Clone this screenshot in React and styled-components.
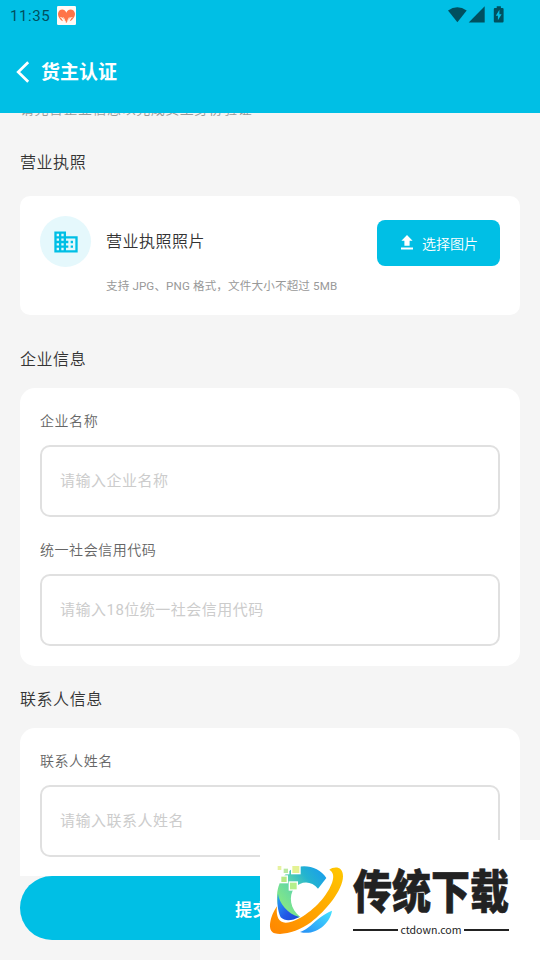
import React from "react";
import styled, { createGlobalStyle } from "styled-components";

const CYAN = "#00bfe5";

const GlobalStyle = createGlobalStyle`
  * { box-sizing: border-box; }
  body {
    margin: 0;
    background: #f5f5f5;
    font-family: Roboto, "Noto Sans CJK SC", sans-serif;
    font-weight: 350;
  }
`;

const Screen = styled.div`
  position: relative;
  width: 540px;
  height: 960px;
  overflow: hidden;
  display: flex;
  flex-direction: column;
  background: #f5f5f5;
`;

const StatusBar = styled.div`
  flex: none;
  height: 31px;
  padding: 0 35px 0 10px;
  display: flex;
  align-items: center;
  justify-content: space-between;
  background: ${CYAN};
  color: #00505f;
`;

const StatusGroup = styled.div`
  display: flex;
  align-items: center;
`;

const Clock = styled.span`
  width: 47px;
  font-size: 15px;
  line-height: 18px;
  font-weight: 400;
  letter-spacing: 0.6px;
  white-space: nowrap;
`;

const Header = styled.header`
  flex: none;
  height: 82px;
  padding-left: 16px;
  display: flex;
  align-items: center;
  gap: 11px;
  background: ${CYAN};
`;

const HeaderTitle = styled.h1`
  margin: 0;
  padding-top: 2px;
  color: #fff;
  font-size: 19px;
  line-height: 28px;
  font-weight: 700;
`;

const Content = styled.main`
  flex: 1;
  min-height: 0;
  overflow: hidden;
  padding: 0 20px;
  display: flex;
  flex-direction: column;
`;

const Intro = styled.p`
  flex: none;
  margin: -14px 0 0;
  height: 20px;
  color: #999;
  font-size: 14px;
  line-height: 20px;
  letter-spacing: 0.52px;
`;

const SectionTitle = styled.h2`
  flex: none;
  margin: ${(p) => p.$top}px 0 ${(p) => p.$bottom}px;
  height: 24px;
  color: #333;
  font-size: 16px;
  line-height: 24px;
  font-weight: 350;
  letter-spacing: 0.55px;
`;

const UploadCard = styled.section`
  flex: none;
  height: 119px;
  padding: 20px;
  display: flex;
  align-items: flex-start;
  background: #fff;
  border-radius: 10px;
`;

const IconCircle = styled.div`
  flex: none;
  width: 51px;
  height: 51px;
  display: grid;
  place-items: center;
  border-radius: 50%;
  background: #e5f8fc;
`;

const UploadText = styled.div`
  flex: 1;
  padding: 14px 0 0 15px;
  white-space: nowrap;
`;

const UploadTitle = styled.div`
  color: #333;
  font-size: 16px;
  line-height: 24px;
  letter-spacing: 0.5px;
`;

const UploadHint = styled.div`
  margin-top: 23px;
  color: #999;
  font-size: 11.6px;
  line-height: 18px;
  font-weight: 400;
  letter-spacing: 0.12px;
`;

const PickButton = styled.button`
  flex: none;
  width: 123px;
  height: 46px;
  margin-top: 4px;
  padding: 0 0 1px 2px;
  display: flex;
  align-items: center;
  justify-content: center;
  gap: 9px;
  border: 0;
  border-radius: 8px;
  background: ${CYAN};
  color: #fff;
  font: inherit;
  font-size: 14px;
`;

const FormCard = styled.section`
  flex: none;
  padding: 20px;
  display: flex;
  flex-direction: column;
  gap: 20px;
  background: #fff;
  border-radius: ${(p) => (p.$continues ? "15px 15px 0 0" : "15px")};
`;

const Field = styled.label`
  display: flex;
  flex-direction: column;
  gap: 11px;
`;

const FieldLabel = styled.span`
  height: 26px;
  color: #666;
  font-size: 14px;
  line-height: 26px;
  letter-spacing: 0.55px;
`;

const Input = styled.input`
  width: 100%;
  height: 72px;
  padding: 0 18px;
  border: 2px solid #e0e0e0;
  border-radius: 10px;
  background: #fff;
  font: inherit;
  font-size: 15px;
  font-weight: 400;
  letter-spacing: 0.5px;
  outline: none;
  &::placeholder { color: #ccc; opacity: 1; }
`;

const Footer = styled.footer`
  flex: none;
  height: 84px;
  padding: 0 20px 20px;
  background: #f5f5f5;
`;

const SubmitButton = styled.button`
  width: 100%;
  height: 64px;
  border: 0;
  border-radius: 32px;
  background: ${CYAN};
  color: #fff;
  font: inherit;
  font-size: 17px;
  font-weight: 700;
  letter-spacing: 0.5px;
`;

const Watermark = styled.aside`
  position: absolute;
  right: 0;
  bottom: 0;
  width: 280px;
  height: 120px;
  padding: 15px 0 0 5px;
  display: flex;
  background: #fff;
`;

const Brand = styled.div`
  width: 156px;
  margin-left: -2px;
  display: flex;
  flex-direction: column;
  align-items: center;
`;

const BrandName = styled.div`
  height: 67px;
  color: #222;
  font-family: "Noto Sans CJK SC", sans-serif;
  font-weight: 900;
  font-size: 39px;
  line-height: 67px;
  white-space: nowrap;
  -webkit-text-stroke: 0.5px #222;
  transform: scaleY(1.18);
`;

const BrandSite = styled.div`
  width: 100%;
  display: flex;
  align-items: center;
  gap: 2px;
  color: #222;
  font-family: "Noto Sans CJK SC", sans-serif;
  font-size: 10.6px;
  font-weight: 400;
  line-height: 16px;
  &::before, &::after {
    content: "";
    flex: 1;
    height: 2px;
    background: #222;
  }
`;

const HeartIcon = () => (
  <svg width="19" height="19" viewBox="0 0 57 57">
    <rect width="57" height="57" rx="4" fill="#fffaf6" />
    <path d="M28 20C22 5 4 10 3 23c0 10 7 19 15 23l-6-13c5 1 9 6 13 14l3 4 3-4c4-8 8-13 13-14l-6 13c8-4 16-13 16-23C53 10 34 5 28 20Z" fill="#ff7448" />
    <path d="M10 33c6 8 12 9 17 15M46 33c-6 8-12 9-17 15M19 34l5 10M37 34l-5 10" fill="none" stroke="#fff0df" strokeWidth="2.5" />
  </svg>
);

const SignalIcons = () => (
  <svg width="57" height="19" viewBox="0 0 57 19" fill="#00505f">
    <path d="M0 4.6Q9.3-2.2 18.7 4.6L9.4 16.3Z" />
    <path d="M36.7.2v16.2H20.7Z" />
    <path fillRule="evenodd" d="M48.7 2V.3h4.2V2h1.6q1.1 0 1.1 1.3v12q0 1.3-1.1 1.3h-7.6q-1.1 0-1.1-1.3v-12q0-1.3 1.1-1.3ZM51.4 3.8l-3.6 6h2.1v4.5l3.7-6.1h-2.2Z" />
  </svg>
);

const BackIcon = () => (
  <svg width="14" height="22" viewBox="0 0 14 22" fill="none" stroke="#fff" strokeWidth="2.7">
    <path d="M12.2 1.2 2.2 11l10 9.8" />
  </svg>
);

const BusinessIcon = () => (
  <svg width="28" height="28" viewBox="0 0 24 24" fill={CYAN}>
    <path d="M12 7V3H2v18h20V7H12zM6 19H4v-2h2v2zm0-4H4v-2h2v2zm0-4H4V9h2v2zm0-4H4V5h2v2zm4 12H8v-2h2v2zm0-4H8v-2h2v2zm0-4H8V9h2v2zm0-4H8V5h2v2zm10 12h-8v-2h2v-2h-2v-2h2v-2h-2V9h8v10zm-2-8h-2v2h2v-2zm0 4h-2v2h2v-2z" />
  </svg>
);

const UploadIcon = () => (
  <svg width="12" height="15" viewBox="0 0 12 15" fill="#fff">
    <path d="M6 0 .4 5.7h3v5h5.2v-5h3ZM0 12.6h12v2H0Z" />
  </svg>
);

const BrandLogo = () => (
  <svg width="90" height="90" viewBox="0 0 270 270">
    <defs>
      <linearGradient id="ring" x1="0" y1="1" x2="1" y2="0">
        <stop stopColor="#ff8500" />
        <stop offset="1" stopColor="#ffc800" />
      </linearGradient>
      <linearGradient id="arc" x1="0" y1=".8" x2="1" y2="0">
        <stop stopColor="#8ded7c" />
        <stop offset=".38" stopColor="#62d6a7" />
        <stop offset=".65" stopColor="#24b4cf" />
        <stop offset="1" stopColor="#1698f4" />
      </linearGradient>
      <linearGradient id="wave" x1="0" y1="0" x2="1" y2="1">
        <stop stopColor="#28a9f5" />
        <stop offset=".6" stopColor="#2257e6" />
        <stop offset="1" stopColor="#194ad0" />
      </linearGradient>
      <linearGradient id="tail" x1="0" y1="1" x2="1" y2="0">
        <stop stopColor="#258df5" />
        <stop offset="1" stopColor="#46e3ff" />
      </linearGradient>
    </defs>
    <path d="M184 69C163 35 115 24 80 43C39 68 28 119 42 160C50 181 68 194 96 188L106 186C75 163 70 122 88 99C109 76 140 77 159 101Z" fill="url(#arc)" />
    <path d="M39 116C43 145 67 176 103 186C83 197 61 201 47 187C38 167 35 141 39 116Z" fill="url(#wave)" />
    <path d="M105 231C140 219 151 188 201 167C196 205 151 244 105 231Z" fill="url(#tail)" />
    <path d="M193 44C207 34 234 32 234 64C234 106 181 169 138 202C103 227 59 242 29 235C5 228 15 184 36 154C32 187 43 204 63 203C98 201 147 165 177 126C202 92 216 57 193 44Z" fill="url(#ring)" />
    <g stroke="#fff" strokeWidth="4">
      <rect x="80" y="31" width="25" height="25" fill="#e4f293" />
      <rect x="54" y="39" width="17" height="17" fill="#b9e9a0" />
      <rect x="47" y="63" width="20" height="20" fill="#b6e984" />
      <rect x="73" y="81" width="24" height="24" fill="#b5ef8b" />
    </g>
    <path d="M38 33h11v12H38z" fill="#e7f2a0" />
  </svg>
);

const FormField = ({ label, placeholder }) => (
  <Field>
    <FieldLabel>{label}</FieldLabel>
    <Input placeholder={placeholder} />
  </Field>
);

export default function App() {
  return (
    <Screen>
      <GlobalStyle />
      <StatusBar>
        <StatusGroup>
          <Clock>11:35</Clock>
          <HeartIcon />
        </StatusGroup>
        <SignalIcons />
      </StatusBar>
      <Header>
        <BackIcon />
        <HeaderTitle>货主认证</HeaderTitle>
      </Header>
      <Content>
        <Intro>请完善企业信息以完成货主身份验证</Intro>
        <SectionTitle $top={32} $bottom={21}>营业执照</SectionTitle>
        <UploadCard>
          <IconCircle><BusinessIcon /></IconCircle>
          <UploadText>
            <UploadTitle>营业执照照片</UploadTitle>
            <UploadHint>支持 JPG、PNG 格式，文件大小不超过 5MB</UploadHint>
          </UploadText>
          <PickButton><UploadIcon />选择图片</PickButton>
        </UploadCard>
        <SectionTitle $top={33} $bottom={16}>企业信息</SectionTitle>
        <FormCard>
          <FormField label="企业名称" placeholder="请输入企业名称" />
          <FormField label="统一社会信用代码" placeholder="请输入18位统一社会信用代码" />
        </FormCard>
        <SectionTitle $top={22} $bottom={16}>联系人信息</SectionTitle>
        <FormCard $continues>
          <FormField label="联系人姓名" placeholder="请输入联系人姓名" />
        </FormCard>
      </Content>
      <Footer>
        <SubmitButton>提交认证</SubmitButton>
      </Footer>
      <Watermark>
        <BrandLogo />
        <Brand>
          <BrandName>传统下载</BrandName>
          <BrandSite>ctdown.com</BrandSite>
        </Brand>
      </Watermark>
    </Screen>
  );
}
